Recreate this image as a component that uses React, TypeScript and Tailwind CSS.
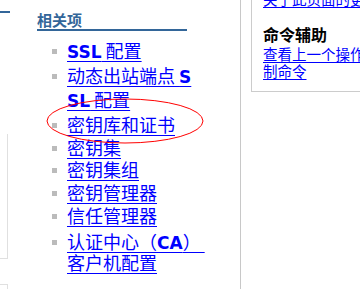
import React from "react";

/* ── Data ── */

type Line = { parts: { text: string; latin?: boolean }[]; mt: string };
type Item = { mt: string; lines: Line[] };

const ITEMS: Item[] = [
  { mt: "mt-0", lines: [{ mt: "mt-0", parts: [{ text: "SSL", latin: true }, { text: " 配置" }] }] },
  {
    mt: "mt-[5px]",
    lines: [
      { mt: "mt-0", parts: [{ text: "动态出站端点 " }, { text: "S", latin: true }] },
      { mt: "mt-[4px]", parts: [{ text: "SL", latin: true }, { text: " 配置" }] },
    ],
  },
  { mt: "mt-[5px]", lines: [{ mt: "mt-0", parts: [{ text: "密钥库和证书" }] }] },
  { mt: "mt-[3px]", lines: [{ mt: "mt-0", parts: [{ text: "密钥集" }] }] },
  { mt: "mt-[2px]", lines: [{ mt: "mt-0", parts: [{ text: "密钥集组" }] }] },
  { mt: "mt-[3px]", lines: [{ mt: "mt-0", parts: [{ text: "密钥管理器" }] }] },
  { mt: "mt-[3px]", lines: [{ mt: "mt-0", parts: [{ text: "信任管理器" }] }] },
  {
    mt: "mt-[6px]",
    lines: [
      { mt: "mt-0", parts: [{ text: "认证中心（" }, { text: "CA", latin: true }, { text: "） " }] },
      { mt: "mt-[1px]", parts: [{ text: "客户机配置" }] },
    ],
  },
];

const CJK = "font-['Noto_Sans_CJK_SC',sans-serif]";

/* ── Related items list ── */

function RelatedItem({ item }: { item: Item }) {
  return (
    <li className={`${item.mt} flex`}>
      <span className="mt-[9px] ml-[15px] h-[5px] w-[5px] shrink-0 bg-[#bbbbbb]" />
      <a className="ml-[10px] text-[#0000ff] underline decoration-1 underline-offset-[3px] whitespace-pre">
        {item.lines.map((line, i) => (
          <span key={i} className={`${line.mt} block h-[20px] leading-[20px]`}>
            {line.parts.map((p, j) =>
              p.latin ? (
                <span key={j} className="font-['DejaVu_Sans',sans-serif] text-[17px] font-bold">
                  {p.text}
                </span>
              ) : (
                <span key={j}>{p.text}</span>
              )
            )}
          </span>
        ))}
      </a>
    </li>
  );
}

/* ── App ── */

export default function App() {
  return (
    <div className={`relative flex h-[289px] w-[360px] overflow-hidden bg-white ${CJK}`}>
      {/* left nav stub */}
      <div className="w-[37px] shrink-0">
        <div className="mt-[11px] h-[2px] w-[10px] bg-[#336699]" />
        <div className="mt-[121px] h-[125px] w-[8px] border-r border-b border-[#e0e0e0]" />
        <div className="mt-[25px] h-[20px] w-[8px] border-t border-r border-[#e0e0e0]" />
      </div>

      {/* related items */}
      <div className="w-[204px] shrink-0 border-r border-[#c8c8c8]">
        <div className="pt-[11px] text-[15px] leading-[18px] font-bold text-[#336699]">相关项</div>
        <div className="h-[2px] w-[150px] bg-[#336699]" />
        <ul className="mt-[9px] text-[18px] leading-[20px]">
          {ITEMS.map((item, i) => (
            <RelatedItem key={i} item={item} />
          ))}
        </ul>
      </div>

      {/* help portlet */}
      <div className="ml-[10px] -mt-[10px] h-[102px] w-[200px] shrink-0 border-l border-b border-[#cccccc] pl-[11px]">
        <a className="block whitespace-nowrap text-[14.5px] leading-[17px] text-[#0000ff] underline decoration-1 underline-offset-[2px]">
          关于此页面的更多信息
        </a>
        <div className="mt-[18px] text-[16px] leading-[18px] font-bold text-black">命令辅助</div>
        <a className="mt-[3px] block whitespace-nowrap text-[14.5px] leading-[16.5px] text-[#0000ff] underline decoration-1 underline-offset-[2px]">
          查看上一个操作的管理脚本编
          <br />
          制命令
        </a>
      </div>

      {/* annotation */}
      <svg
        className="pointer-events-none absolute left-[46px] top-[98px]"
        width="158"
        height="46"
        viewBox="0 0 158 46"
      >
        <ellipse cx="79" cy="23" rx="78" ry="22" fill="none" stroke="#ff0000" strokeWidth="1" />
      </svg>
    </div>
  );
}
